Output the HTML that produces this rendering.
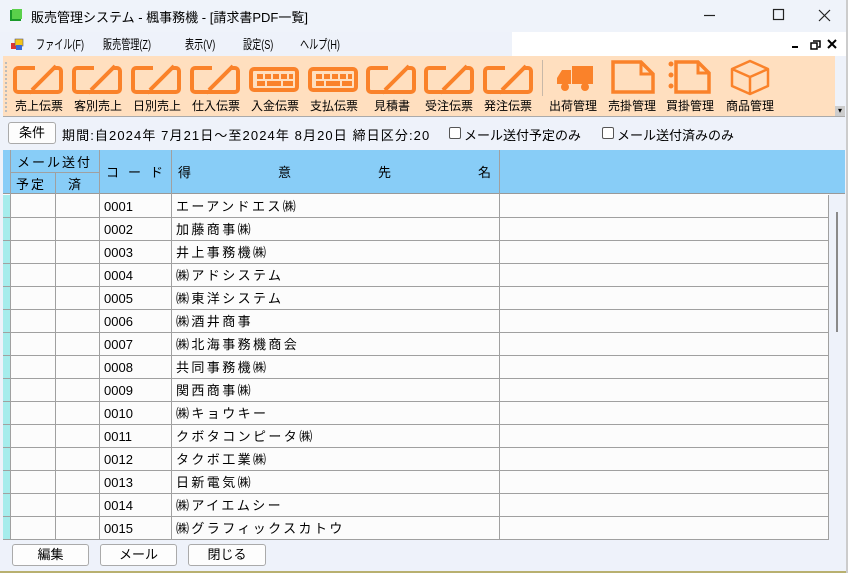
<!DOCTYPE html>
<html><head><meta charset="utf-8"><style>
*{margin:0;padding:0;box-sizing:border-box}
body{width:848px;height:573px;background:#eef2fa;font-family:"Liberation Sans","Noto Sans CJK JP",sans-serif;font-size:13px;color:#000;position:relative;overflow:hidden}
.a{position:absolute}
.tb{left:0;top:0;width:848px;height:32px;background:#eff3fa}
.menu span{position:absolute;top:34px;font-size:13px;transform:scaleX(0.7);transform-origin:left;white-space:nowrap}
.tool{left:3px;top:56px;width:832px;height:60px;background:#ffdfbf}
.lbl{position:absolute;top:97px;font-size:12px;width:60px;text-align:center}
.grid{left:3px;top:150px;width:826px;height:390px;background:#fcfcfc}
.hd{background:#88cdf7}
.cell{position:absolute;font-size:13px}
.btn{position:absolute;top:544px;height:22px;border:1px solid #aaa;border-radius:3px;background:#fdfdfd;text-align:center;line-height:20px;font-size:13px}
</style></head><body>
<div class="a tb"></div>
<svg class="a" style="left:9px;top:8px" width="14" height="14"><rect x="1" y="2" width="11" height="11" fill="#1a9a2a"/><rect x="3" y="1" width="10" height="10" fill="#5ad04a"/></svg>
<div class="a" style="left:31px;top:7px;font-size:13px">販売管理システム - 楓事務機 - [請求書PDF一覧]</div>
<svg class="a" style="left:700px;top:0" width="148" height="32" stroke="#222" stroke-width="1.2" fill="none"><line x1="4" y1="15.5" x2="15" y2="15.5"/><rect x="73.5" y="9.5" width="10" height="10"/><path d="M119 10l11 11M130 10l-11 11"/></svg>
<div class="a" style="left:512px;top:32px;width:336px;height:24px;background:#fff"></div>
<svg class="a" style="left:10px;top:37px" width="14" height="14"><rect x="1" y="6" width="5" height="6" fill="#d33"/><rect x="5" y="2" width="8" height="7" fill="#f5c518" stroke="#557" stroke-width=".6"/><rect x="6" y="8" width="6" height="5" fill="#3a6ad8"/></svg>
<div class="menu"><span style="left:36px">ファイル(F)</span><span style="left:103px">販売管理(Z)</span><span style="left:185px">表示(V)</span><span style="left:243px">設定(S)</span><span style="left:300px">ヘルプ(H)</span></div>
<svg class="a" style="left:790px;top:38px" width="50" height="12" fill="#000"><rect x="2" y="8" width="6" height="2"/><path d="M23 3h7v6h-2M21 5h6v6h-6z" stroke="#000" stroke-width="1.5" fill="none"/><path d="M38 2l8 8M46 2l-8 8" stroke="#000" stroke-width="2"/></svg>
<div class="a tool"></div>
<div class="a" style="left:5px;top:62px;width:1px;height:50px;border-left:2px dotted #bbb"></div>
<svg class="a" style="left:0;top:56px" width="848" height="40" fill="none" stroke="#fa822a">
<defs>
<g id="pen"><path d="M2 9a3 3 0 0 1 3-3h17M40 6h5a3 3 0 0 1 3 3v18a3 3 0 0 1-3 3H5a3 3 0 0 1-3-3V9" stroke-width="4" stroke-linejoin="round"/><path d="M19 28L43 4" stroke-width="4"/><path d="M17 32l2-4" stroke-width="1.5"/></g>
<g id="kb"><rect x="2" y="7" width="46" height="21" rx="3" stroke-width="4"/><g fill="#fa822a" stroke="none"><rect x="8" y="12" width="6" height="5"/><rect x="16" y="12" width="6" height="5"/><rect x="24" y="12" width="6" height="5"/><rect x="32" y="12" width="6" height="5"/><rect x="40" y="12" width="4" height="5"/><rect x="8" y="19" width="8" height="5"/><rect x="18" y="19" width="14" height="5"/><rect x="34" y="19" width="10" height="5"/></g></g>
</defs>
<use href="#pen" x="13" y="6"/><use href="#pen" x="72" y="6"/><use href="#pen" x="131" y="6"/><use href="#pen" x="190" y="6"/>
<use href="#kb" x="249" y="6"/><use href="#kb" x="308" y="6"/>
<use href="#pen" x="366" y="6"/><use href="#pen" x="424" y="6"/><use href="#pen" x="483" y="6"/>
<line x1="542.5" y1="4" x2="542.5" y2="56" stroke="#c8b8a8" stroke-width="1"/>
<g fill="#fa822a" stroke="none"><rect x="572" y="10" width="21" height="18"/><path d="M571 14h-9l-5 8v6h14z"/><circle cx="565" cy="31" r="4"/><circle cx="585" cy="31" r="4"/></g>
<path d="M613 6h28l12 12v18h-40z" stroke-width="3.5"/><path d="M641 6v12h12" stroke-width="3"/>
<g fill="#fa822a" stroke="none"><circle cx="671" cy="8" r="2.5"/><circle cx="671" cy="19" r="2.5"/><circle cx="671" cy="30" r="2.5"/></g>
<path d="M676 6h22l11 11v19h-33z" stroke-width="3.5"/><path d="M698 6v11h11" stroke-width="3"/>
<path d="M750 5l18 8v17l-18 8l-18-8V13z M732 13l18 8l18-8 M750 21v17" stroke-width="2.5" stroke-linejoin="round"/>
</svg>
<div class="lbl" style="left:9px">売上伝票</div><div class="lbl" style="left:68px">客別売上</div><div class="lbl" style="left:127px">日別売上</div><div class="lbl" style="left:186px">仕入伝票</div><div class="lbl" style="left:245px">入金伝票</div><div class="lbl" style="left:304px">支払伝票</div><div class="lbl" style="left:362px">見積書</div><div class="lbl" style="left:419px">受注伝票</div><div class="lbl" style="left:478px">発注伝票</div><div class="lbl" style="left:543px">出荷管理</div><div class="lbl" style="left:602px">売掛管理</div><div class="lbl" style="left:660px">買掛管理</div><div class="lbl" style="left:720px">商品管理</div>
<div class="a" style="left:835px;top:106px;width:10px;height:10px;background:#ccc;font-size:8px;text-align:center;line-height:10px">▾</div>
<div class="a" style="left:3px;top:116px;width:842px;height:1px;background:#aaa"></div>
<div class="btn" style="left:8px;top:122px;width:48px;height:22px">条件</div>
<div class="a" style="left:62px;top:125px;font-size:13px;white-space:nowrap;letter-spacing:1.1px">期間:自2024年 7月21日～至2024年 8月20日 締日区分:20</div>
<div class="a" style="left:449px;top:127px;width:12px;height:12px;border:1px solid #555;border-radius:2px;background:#fff"></div>
<div class="a" style="left:464px;top:125px">メール送付予定のみ</div>
<div class="a" style="left:602px;top:127px;width:12px;height:12px;border:1px solid #555;border-radius:2px;background:#fff"></div>
<div class="a" style="left:617px;top:125px">メール送付済みのみ</div>
<div class="a grid"></div>
<div class="a hd" style="left:3px;top:150px;width:842px;height:44px;border-bottom:1px solid #999"></div>
<svg class="a" style="left:0;top:150px" width="848" height="390">
<rect x="3" y="45" width="7" height="345" fill="#a6ecec"/>
<rect x="828" y="45" width="17" height="345" fill="#eef2fa"/>
<rect x="836" y="62" width="2" height="120" fill="#8a8a8a"/>
<g stroke="#a0a0a0" stroke-width="1">
<line x1="10.5" y1="0" x2="10.5" y2="390"/><line x1="55.5" y1="22" x2="55.5" y2="390"/><line x1="99.5" y1="0" x2="99.5" y2="390"/><line x1="171.5" y1="0" x2="171.5" y2="390"/><line x1="499.5" y1="0" x2="499.5" y2="390"/><line x1="828.5" y1="45" x2="828.5" y2="390"/>
<line x1="10" y1="22.5" x2="99" y2="22.5"/>
</g>
<g stroke="#a0a0a0">
<line x1="3" y1="67.5" x2="828" y2="67.5"/><line x1="3" y1="90.5" x2="828" y2="90.5"/><line x1="3" y1="113.5" x2="828" y2="113.5"/><line x1="3" y1="136.5" x2="828" y2="136.5"/><line x1="3" y1="159.5" x2="828" y2="159.5"/><line x1="3" y1="182.5" x2="828" y2="182.5"/><line x1="3" y1="205.5" x2="828" y2="205.5"/><line x1="3" y1="228.5" x2="828" y2="228.5"/><line x1="3" y1="251.5" x2="828" y2="251.5"/><line x1="3" y1="274.5" x2="828" y2="274.5"/><line x1="3" y1="297.5" x2="828" y2="297.5"/><line x1="3" y1="320.5" x2="828" y2="320.5"/><line x1="3" y1="343.5" x2="828" y2="343.5"/><line x1="3" y1="366.5" x2="828" y2="366.5"/><line x1="3" y1="389.5" x2="828" y2="389.5"/>
</g>
</svg>
<div class="cell" style="left:17px;top:152px;letter-spacing:2px">メール送付</div>
<div class="cell" style="left:16px;top:174px;letter-spacing:2px">予定</div><div class="cell" style="left:68px;top:174px">済</div>
<div class="cell" style="left:106px;top:162px;letter-spacing:9px">コード</div>
<div class="cell" style="left:178px;top:162px">得</div><div class="cell" style="left:278px;top:162px">意</div><div class="cell" style="left:378px;top:162px">先</div><div class="cell" style="left:478px;top:162px">名</div>
<div class="a" style="left:104px;top:195px;line-height:23px;font-size:13px">0001<br>0002<br>0003<br>0004<br>0005<br>0006<br>0007<br>0008<br>0009<br>0010<br>0011<br>0012<br>0013<br>0014<br>0015</div>
<div class="a" style="left:176px;top:195px;line-height:23px;font-size:13px;white-space:nowrap;letter-spacing:2.4px">エーアンドエス㈱<br>加藤商事㈱<br>井上事務機㈱<br>㈱アドシステム<br>㈱東洋システム<br>㈱酒井商事<br>㈱北海事務機商会<br>共同事務機㈱<br>関西商事㈱<br>㈱キョウキー<br>クボタコンピータ㈱<br>タクボ工業㈱<br>日新電気㈱<br>㈱アイエムシー<br>㈱グラフィックスカトウ</div>
<div class="btn" style="left:12px;width:77px">編集</div>
<div class="btn" style="left:100px;width:77px">メール</div>
<div class="btn" style="left:188px;width:78px">閉じる</div>
<div class="a" style="left:0;top:571px;width:848px;height:2px;background:#b8b070"></div>
<div class="a" style="left:846px;top:0;width:2px;height:573px;background:#ccc"></div>
</body></html>
